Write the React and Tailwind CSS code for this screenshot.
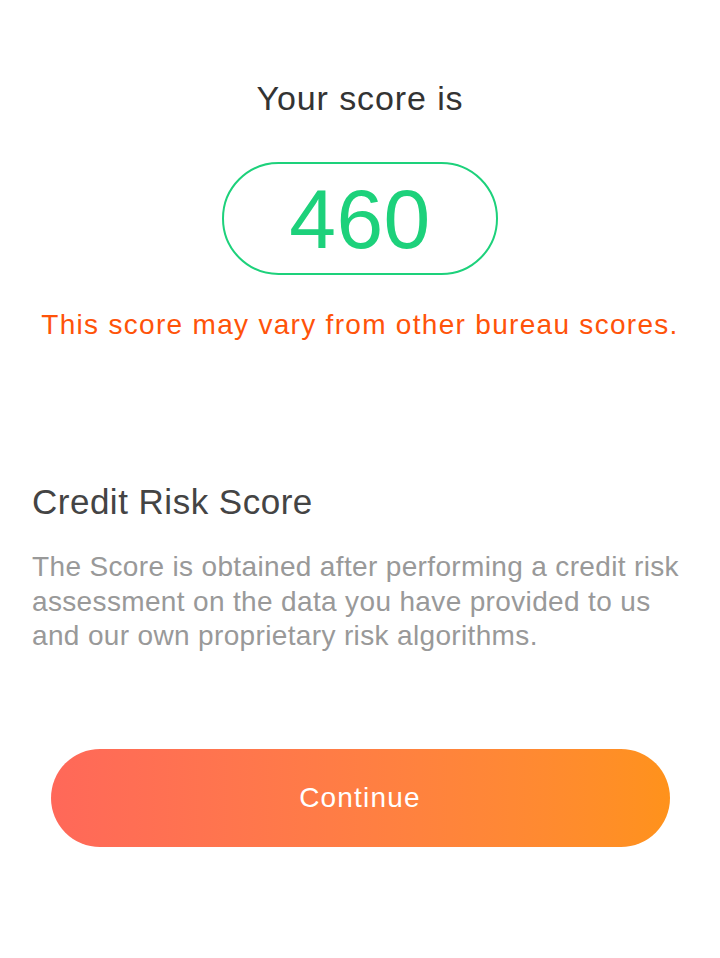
export default function App() {
  return (
    <div className="w-[720px] h-[958px] bg-white flex flex-col items-center" style={{ fontFamily: '"Liberation Sans", Arial, sans-serif' }}>
      <div className="mt-[74px] text-[34px] leading-[48px] text-[#333333] tracking-[0.9px]">Your score is</div>
      <div className="mt-[40px] w-[276px] h-[113px] rounded-full border-2 border-[#1dd17b] flex items-center justify-center">
        <span className="text-[84px] leading-none text-[#1dd17b] tracking-[0.5px]">460</span>
      </div>
      <div className="mt-[30px] text-[28px] leading-[40px] text-[#ff5309] tracking-[1.3px] whitespace-nowrap">This score may vary from other bureau scores.</div>
      <div className="self-stretch px-8 mt-[133px]">
        <div className="text-[35px] leading-[48px] text-[#444444] tracking-[0.5px]">Credit Risk Score</div>
        <div className="mt-[24px] text-[28px] leading-[34.5px] text-[#999999] tracking-[0.35px]">
          The Score is obtained after performing a credit risk assessment on the data you have provided to us and our own proprietary risk algorithms.
        </div>
      </div>
      <button className="mt-[95px] w-[619px] h-[98px] rounded-full bg-gradient-to-r from-[#ff6859] to-[#ff921b] text-white text-[28px] tracking-[1.2px]">
        Continue
      </button>
    </div>
  );
}
